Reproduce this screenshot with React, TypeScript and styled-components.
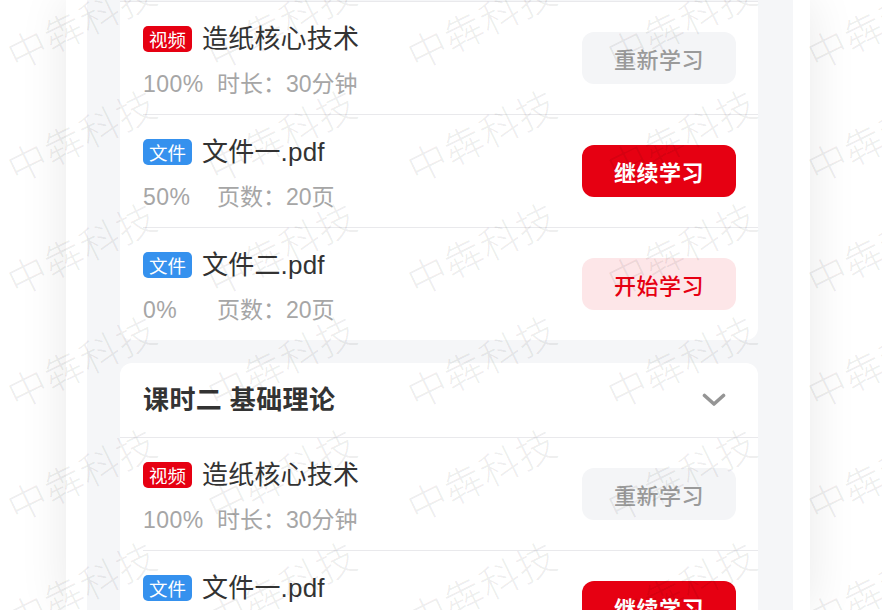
import React from "react";
import styled, { createGlobalStyle } from "styled-components";

const GlobalStyle = createGlobalStyle`
  html, body {
    margin: 0;
    padding: 0;
    background: #ffffff;
    overflow: hidden;
  }
  body {
    font-family: "Liberation Sans", "Noto Sans CJK SC", sans-serif;
    -webkit-font-smoothing: antialiased;
  }
  * { box-sizing: border-box; }
`;

const Viewport = styled.div`
  width: 882px;
  height: 610px;
  overflow: hidden;
  position: relative;
  background: #ffffff;
`;

const Phone = styled.div`
  margin-left: 66px;
  width: 744px;
  height: 610px;
  background: #ffffff;
  padding: 0 17px 0 21px;
  box-shadow: 0 0 46px rgba(0, 0, 0, 0.09);
`;

const Content = styled.div`
  height: 100%;
  overflow: hidden;
  background: #f5f6f8;
  padding: 1px 35px 0 33px;
  display: flex;
  flex-direction: column;
  gap: 23px;
`;

const Card = styled.section<{ $continued?: boolean }>`
  flex-shrink: 0;
  background: #ffffff;
  border-radius: ${(p) => (p.$continued ? "0 0 12px 12px" : "12px")};
  border-top: ${(p) => (p.$continued ? "1px solid #e9e9ec" : "none")};
  overflow: hidden;
`;

const Header = styled.div`
  height: 75px;
  border-bottom: 1px solid #e9e9ec;
  display: flex;
  align-items: center;
  justify-content: space-between;
  padding: 0 32px 0 23px;
`;

const HeaderTitle = styled.h3`
  margin: 0;
  font-size: 26px;
  line-height: 36px;
  font-weight: 700;
  color: #333333;
  letter-spacing: 0.4px;
`;

const Row = styled.div<{ $divider?: boolean }>`
  margin-left: 23px;
  padding-right: 22px;
  height: ${(p) => (p.$divider ? 113 : 112)}px;
  border-top: ${(p) => (p.$divider ? "1px solid #e9e9ec" : "none")};
  display: flex;
  align-items: center;
  justify-content: space-between;
`;

const Info = styled.div`
  display: flex;
  flex-direction: column;
  gap: 12px;
  padding-top: 3px;
`;

const TitleLine = styled.div`
  display: flex;
  align-items: center;
  gap: 10px;
  height: 36px;
`;

const Badge = styled.span<{ $kind: "video" | "file" }>`
  display: inline-flex;
  align-items: center;
  justify-content: center;
  width: 49px;
  height: 26px;
  border-radius: 5px;
  background: ${(p) => (p.$kind === "video" ? "#e60012" : "#3591ee")};
  color: #ffffff;
  font-size: 18.5px;
  line-height: 26px;
  font-family: "Noto Sans CJK SC", sans-serif;
`;

const ItemName = styled.span`
  font-size: 26px;
  line-height: 36px;
  color: #333333;
  letter-spacing: 0.2px;
`;

const Meta = styled.div`
  display: flex;
  align-items: center;
  height: 30px;
  font-size: 23px;
  line-height: 30px;
  color: #a6a6a6;
`;

const Percent = styled.span`
  display: inline-block;
  width: 74px;
  letter-spacing: 0.5px;
`;

type BtnVariant = "done" | "doing" | "todo";

const ActionButton = styled.button<{ $variant: BtnVariant }>`
  width: 154px;
  height: 52px;
  border: none;
  border-radius: 12px;
  font-family: "Noto Sans CJK SC", sans-serif;
  font-size: 22px;
  font-weight: ${(p) => (p.$variant === "doing" ? 700 : 500)};
  letter-spacing: 0.5px;
  background: ${(p) =>
    p.$variant === "done" ? "#f4f5f7" : p.$variant === "doing" ? "#e60012" : "#fde6e8"};
  color: ${(p) =>
    p.$variant === "done" ? "#9a9a9a" : p.$variant === "doing" ? "#ffffff" : "#e60012"};
  cursor: pointer;
  padding: 0;
`;

const WatermarkLayer = styled.div`
  position: absolute;
  inset: 0;
  pointer-events: none;
  overflow: hidden;
`;

const WatermarkGrid = styled.div`
  position: absolute;
  left: -19px;
  top: -36px;
  display: grid;
  grid-template-columns: repeat(5, 200px);
  grid-auto-rows: 113px;
`;

const WatermarkCell = styled.div`
  display: flex;
  align-items: center;
  justify-content: center;
`;

const WatermarkText = styled.span`
  display: inline-block;
  transform: rotate(-26deg);
  white-space: nowrap;
  font-family: "Noto Sans CJK SC", sans-serif;
  font-weight: 200;
  font-size: 39px;
  letter-spacing: 1px;
  color: rgba(0, 0, 0, 0.075);
`;

const Chevron = () => (
  <svg width="24" height="14" viewBox="0 0 24 14" fill="none">
    <polyline
      points="2.5,2.5 12,11 21.5,2.5"
      stroke="#959595"
      strokeWidth="3.6"
      strokeLinecap="round"
      strokeLinejoin="round"
    />
  </svg>
);

type Item = {
  kind: "video" | "file";
  name: string;
  percent: string;
  detail: string;
  action: BtnVariant;
};

const items: Item[] = [
  { kind: "video", name: "造纸核心技术", percent: "100%", detail: "时长：30分钟", action: "done" },
  { kind: "file", name: "文件一.pdf", percent: "50%", detail: "页数：20页", action: "doing" },
  { kind: "file", name: "文件二.pdf", percent: "0%", detail: "页数：20页", action: "todo" },
];

const actionLabel: Record<BtnVariant, string> = {
  done: "重新学习",
  doing: "继续学习",
  todo: "开始学习",
};

const ItemRow = ({ item, divider }: { item: Item; divider: boolean }) => (
  <Row $divider={divider}>
    <Info>
      <TitleLine>
        <Badge $kind={item.kind}>{item.kind === "video" ? "视频" : "文件"}</Badge>
        <ItemName>{item.name}</ItemName>
      </TitleLine>
      <Meta>
        <Percent>{item.percent}</Percent>
        <span>{item.detail}</span>
      </Meta>
    </Info>
    <ActionButton $variant={item.action}>{actionLabel[item.action]}</ActionButton>
  </Row>
);

export default function App() {
  return (
    <>
      <GlobalStyle />
      <Viewport>
        <Phone>
          <Content>
            <Card $continued>
              {items.map((it, i) => (
                <ItemRow key={i} item={it} divider={i > 0} />
              ))}
            </Card>
            <Card>
              <Header>
                <HeaderTitle>课时二 基础理论</HeaderTitle>
                <Chevron />
              </Header>
              {items.map((it, i) => (
                <ItemRow key={i} item={it} divider={i > 0} />
              ))}
            </Card>
          </Content>
        </Phone>
        <WatermarkLayer>
          <WatermarkGrid>
            {Array.from({ length: 40 }).map((_, i) => (
              <WatermarkCell key={i}>
                <WatermarkText>中犇科技</WatermarkText>
              </WatermarkCell>
            ))}
          </WatermarkGrid>
        </WatermarkLayer>
      </Viewport>
    </>
  );
}
